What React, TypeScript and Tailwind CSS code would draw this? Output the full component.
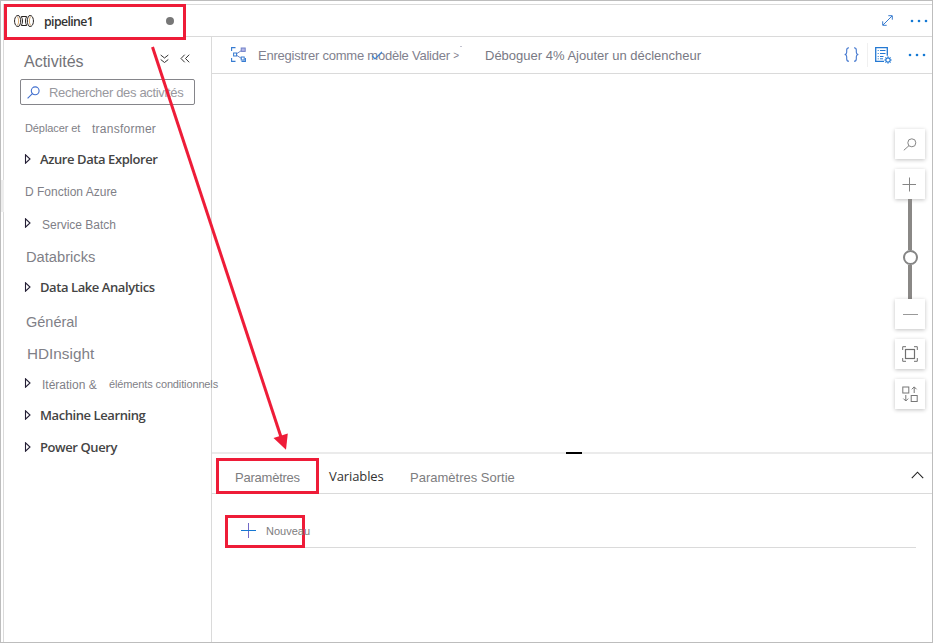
import type { ReactNode } from "react";

const sans = "font-['Liberation_Sans',Arial,sans-serif] whitespace-nowrap";
const segoe = "font-['Open_Sans','Noto_Sans',sans-serif] whitespace-nowrap";

function Caret() {
  return (
    <svg width="7" height="10" viewBox="0 0 7 10" className="-mt-[2px] shrink-0">
      <path d="M1.5 .8V9.2L6 5Z" fill="none" stroke="#241f35" strokeWidth="1.1" />
    </svg>
  );
}

function Bold({ children }: { children: ReactNode }) {
  return (
    <div className="flex h-8 items-center pl-5">
      <Caret />
      <span className={`${segoe} ml-[9px] text-[13px] font-semibold tracking-[-0.42px] text-[#444]`}>{children}</span>
    </div>
  );
}

function ToolButton({ children }: { children: ReactNode }) {
  return (
    <div className="flex h-[30px] w-[30px] items-center justify-center bg-white shadow-[0_1px_4px_rgba(0,0,0,0.24)]">
      {children}
    </div>
  );
}

function Dots() {
  return (
    <svg width="18" height="4" viewBox="0 0 18 4">
      <g fill="#1479d4"><circle cx="2" cy="2" r="1.3" /><circle cx="9" cy="2" r="1.3" /><circle cx="16" cy="2" r="1.3" /></g>
    </svg>
  );
}

function Sidebar() {
  return (
    <aside className="flex w-[208px] shrink-0 flex-col border-r border-[#dadada]">
      <div className="flex h-[42px] items-center pl-5 pt-[7px]">
        <span className={`${sans} w-[136px] text-[16px] text-[#737378]`}>Activités</span>
        <svg width="9" height="10" viewBox="0 0 9 10" fill="none" stroke="#333" className="-mt-1.5"><path d="M.7 1 4.5 4 8.3 1M.7 5.5 4.5 8.5 8.3 5.5" /></svg>
        <svg width="10" height="9" viewBox="0 0 10 9" fill="none" stroke="#333" className="-mt-1.5 ml-[11px]"><path d="M4.7.7 1 4.5 4.7 8.3M9.2.7 5.5 4.5 9.2 8.3" /></svg>
      </div>
      <div className="ml-4 flex h-[26px] w-[175px] items-center rounded-[2px] border border-[#85858a] pl-[6px]">
        <svg width="13" height="13" viewBox="0 0 13 13" fill="none" stroke="#416fce" strokeWidth="1.1"><circle cx="8.2" cy="4.8" r="3.9" /><path d="M5.4 7.6.6 12.4" /></svg>
        <span className={`${sans} ml-[9px] pt-[2px] text-[13px] tracking-[-0.33px] text-[#98989e]`}>Rechercher des activités</span>
      </div>
      <nav className="flex flex-col pt-[7px] text-[#7f7f87]">
        <div className="flex h-8 items-center pl-[21px]">
          <span className={`${sans} w-[67px] text-[11px] tracking-[-0.1px]`}>Déplacer et</span>
          <span className={`${sans} pt-px text-[12px] tracking-[0.25px]`}>transformer</span>
        </div>
        <Bold>Azure Data Explorer</Bold>
        <div className="flex h-8 items-center pl-[21px]"><span className={`${sans} text-[12px]`}>D Fonction Azure</span></div>
        <div className="flex h-8 items-center pl-5">
          <Caret />
          <span className={`${sans} ml-[11px] pt-[2px] text-[12px]`}>Service Batch</span>
        </div>
        <div className="flex h-8 items-center pl-[22px] pt-[3px]"><span className={`${sans} text-[14.7px]`}>Databricks</span></div>
        <Bold>Data Lake Analytics</Bold>
        <div className="flex h-8 items-center pl-[22px] pt-[5px]"><span className={`${sans} text-[14.5px]`}>Général</span></div>
        <div className="flex h-8 items-center pl-[23px] pt-[5px]"><span className={`${sans} text-[15.3px]`}>HDInsight</span></div>
        <div className="flex h-8 items-center pl-5">
          <Caret />
          <span className={`${sans} ml-[11px] w-[67px] shrink-0 pt-[2px] text-[12px]`}>Itération &amp;</span>
          <span className={`${sans} text-[11px] tracking-[-0.13px]`}>éléments conditionnels</span>
        </div>
        <Bold>Machine Learning</Bold>
        <Bold>Power Query</Bold>
      </nav>
    </aside>
  );
}

function Toolbar() {
  return (
    <div className="flex h-[37px] shrink-0 items-center border-b border-[#dadada] pl-[19px]">
      <svg width="15" height="15" viewBox="0 0 15 15" fill="none" stroke="#367bd1" className="-mt-px">
        <path d="M4.5.6H.6V4M.6 11v3.4h3.9M14.4 11v3.4h-3.9" strokeWidth="1.1" />
        <path d="m5.5 6.8 5-3.3M5.5 8.2l5 3.3" stroke="#7187c8" />
        <rect x="2.6" y="6" width="3" height="3" /><rect x="10.2" y="1" width="4" height="3.4" fill="#b5b7e8" stroke="#7180c8" /><rect x="10.2" y="10" width="3" height="3" />
      </svg>
      <div className="relative ml-3 flex w-[227px] pt-[2px]">
        <span className={`${sans} text-[13px] tracking-[-0.23px] text-[#81818e]`}>Enregistrer comme modèle Valider <span className="relative -top-px text-[10px]">&gt;</span></span>
        <svg width="12" height="9" viewBox="0 0 12 9" fill="none" className="absolute left-[113px] top-[7px]"><path d="M1 4.7 4 7.8 11 .8" stroke="#3981d2" strokeWidth="1.2" /></svg>
        <i className="absolute left-[202px] top-[2px] h-px w-[2px] bg-[#c4c4d1]" />
      </div>
      <span className={`${sans} pt-[2px] text-[13px] text-[#797984]`}>Déboguer 4% Ajouter un déclencheur</span>
      <div className="ml-auto flex items-center pr-[6px]">
        <svg width="15" height="15" viewBox="0 0 15 15" fill="none" stroke="#4478cf" strokeWidth="1.1" className="-mt-px"><path d="M5 .7C3 .7 2.7 1.3 2.7 3v2.3c0 1.4-.6 2-2 2.2 1.4.2 2 .8 2 2.2V12c0 1.7.3 2.3 2.3 2.3M10 .7c2 0 2.3.6 2.3 2.3v2.3c0 1.4.6 2 2 2.2-1.4.2-2 .8-2 2.2V12c0 1.7-.3 2.3-2.3 2.3" /></svg>
        <i className="ml-2 h-6 w-px bg-[#f0f0f0]" />
        <svg width="17" height="17" viewBox="0 0 17 17" fill="none" stroke="#2479d3" className="ml-[7px]">
          <path d="M9 14.3H.7V.7h11.6v8" strokeWidth="1.3" /><path d="M2.7 3.5h1M5 3.5h5.5M2.7 6.5h1M5 6.5h5.5M2.7 9.5h1M5 9.5h3.5M2.7 11.8h1M5 11.8h3" />
          <circle cx="13" cy="13" r="2.2" strokeWidth="1.2" /><path d="M13 9.3v1.3M13 15.4v1.3M9.3 13h1.3M15.4 13h1.3M10.4 10.4l.9.9M14.7 14.7l.9.9M15.6 10.4l-.9.9M11.3 14.7l-.9.9" />
        </svg>
        <div className="ml-4 flex"><Dots /></div>
      </div>
    </div>
  );
}

function CanvasTools() {
  return (
    <div className="ml-auto mr-[7px] flex w-[30px] flex-col items-center pt-[55px]">
      <ToolButton><svg width="14" height="13" viewBox="0 0 14 13" fill="none" stroke="#858585"><circle cx="8.8" cy="4.8" r="4" /><path d="M6 7.6.8 12.3" /></svg></ToolButton>
      <div className="mt-[10px]"><ToolButton><svg width="14" height="15" viewBox="0 0 14 15" stroke="#858585" className="-ml-0.5"><path d="M7.5.5v14M.5 7.5h14" /></svg></ToolButton></div>
      <div className="h-[51px] w-1 bg-[#8a8886]" />
      <div className="h-[15px] w-[15px] shrink-0 rounded-full border-2 border-[#858585] bg-white" />
      <div className="h-[34px] w-1 bg-[#8a8886]" />
      <ToolButton><i className="h-px w-[15px] bg-[#999]" /></ToolButton>
      <div className="mt-[10px]"><ToolButton><svg width="16" height="16" viewBox="0 0 16 16" fill="none" stroke="#707070"><path d="M4 .7H.7V4M12 .7h3.3V4M4 15.3H.7V12M12 15.3h3.3V12" /><rect x="3.5" y="3.5" width="9" height="9" strokeWidth="1.2" /></svg></ToolButton></div>
      <div className="mt-[10px]"><ToolButton><svg width="16" height="16" viewBox="0 0 16 16" fill="none" stroke="#777"><rect x=".8" y="1" width="6" height="6" /><rect x="9.2" y="9.5" width="6" height="6" /><path d="M12.2 7V.9M9.8 3.3l2.4-2.4 2.4 2.4M3.8 9v6M1.4 12.6 3.8 15l2.4-2.4" /></svg></ToolButton></div>
    </div>
  );
}

function BottomPanel() {
  return (
    <div className="flex flex-col">
      <div className="h-[2px] bg-[#ebebeb] pl-[354px]"><div className="h-[2px] w-4 bg-black" /></div>
      <div className="flex h-[40px] items-center border-b border-[#dadada] pl-1 pt-[6px]">
        <div className="-mb-px flex h-9 w-[103px] shrink-0 items-center self-end border-[3px] border-[#ee1c38] pl-4 pt-[3px]"><span className={`${sans} text-[13px] tracking-[-0.23px] text-[#7d7d80]`}>Paramètres</span></div>
        <span className={`${segoe} ml-[10px] w-[81px] pt-[1px] text-[13px] tracking-[-0.1px] text-[#333]`}>Variables</span>
        <span className={`${sans} pt-[2px] text-[13px] text-[#7d7d80]`}>Paramètres Sortie</span>
        <svg width="13" height="8" viewBox="0 0 13 8" fill="none" stroke="#222" className="-mt-[3px] ml-auto mr-2"><path d="M.8 7.2 6.5 1.2 12.2 7.2" strokeWidth="1.1" /></svg>
      </div>
      <div className="ml-[13px] mr-[16px] h-[54px] border-b border-[#dadada] pt-[21px]">
        <div className="flex h-[33px] w-20 items-center border-[3px] border-[#ee1c38] pl-[13px]">
          <svg width="15" height="15" viewBox="0 0 15 15" className="-mt-[3px] shrink-0"><path d="M7.5 0v15" stroke="#7168c7" /><path d="M0 7.5h15" stroke="#1677d2" /></svg>
          <span className={`${sans} ml-[10px] text-[11px] text-[#7d7d80]`}>Nouveau</span>
        </div>
      </div>
    </div>
  );
}

export default function App() {
  return (
    <div className="relative h-[643px] w-[933px] overflow-hidden border border-[#bdbdbd] bg-white pl-[2px] pt-[3px]">
      <div className="flex h-full flex-col border-l border-t border-[#dadada]">
        <header className="flex h-8 shrink-0 items-center border-b border-[#dadada]">
          <div className="relative z-10 mt-[3px] flex h-9 w-[182px] shrink-0 items-center border-[3px] border-[#ee1c38] bg-white pl-[7px]">
            <svg width="20" height="12" viewBox="0 0 20 12" fill="none" stroke="#292321" className="-mt-[2px]">
              <path d="M2.8.7C-.2 2.6-.2 9.4 2.8 11.3M2.8.7H5C7.2 3.4 7.2 8.6 5 11.3H2.8M17.2.7c3 1.9 3 8.7 0 10.6M17.2.7H15C12.8 3.4 12.8 8.6 15 11.3h2.2" />
              <path d="M7.3 1.5h5.4M7.3 10.5h5.4M7.3 1.5c1.6 2.5 1.6 6.5 0 9M12.7 1.5c-1.6 2.5-1.6 6.5 0 9" />
              <path d="M3.6 1.8C5 4.2 5 7.8 3.6 10.2M16.4 1.8C15 4.2 15 7.8 16.4 10.2" stroke="#cf9144" strokeWidth=".8" />
            </svg>
            <span className={`${segoe} ml-[10px] pt-px text-[12.3px] font-semibold tracking-[-0.6px] text-[#333]`}>pipeline1</span>
            <i className="-mt-[2px] ml-auto mr-[9px] h-2 w-2 rounded-full bg-[#777]" />
          </div>
          <div className="ml-auto flex items-center pr-1">
            <svg width="11" height="11" viewBox="0 0 11 11" fill="none" stroke="#397ccf"><path d="M1 10 10 1M6.3.7h4v4M.7 6.3v4h4" /></svg>
            <div className="ml-[17px] flex"><Dots /></div>
          </div>
        </header>
        <div className="flex min-h-0 flex-1">
          <Sidebar />
          <main className="flex min-w-0 flex-1 flex-col">
            <Toolbar />
            <section className="flex h-[378px] shrink-0"><CanvasTools /></section>
            <BottomPanel />
          </main>
        </div>
      </div>
      <div className="absolute left-0 top-[179px] h-8 w-[3px] bg-[#ededed]" />
      <svg className="pointer-events-none absolute -left-px -top-px" width="320" height="460" viewBox="0 0 320 460">
        <path d="M152.5 47 281 437" stroke="#ee1c38" strokeWidth="3" fill="none" /><path d="m273.5 438 14.3-4.5-1.8 16.3Z" fill="#ee1c38" />
      </svg>
    </div>
  );
}
